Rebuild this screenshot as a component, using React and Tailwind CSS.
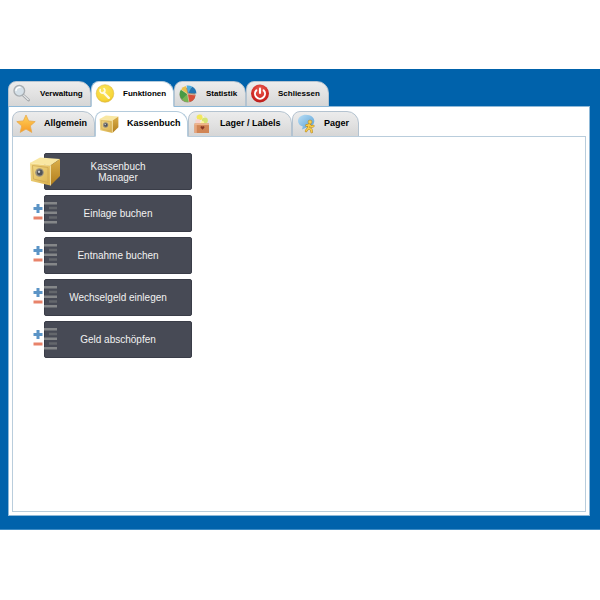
import { useState } from 'react';

function MagnifierIcon() {
  return (
    <svg className="w-5 h-5" viewBox="0 0 20 20" fill="none">
      <path d="M11.500 11.500l5 4.500" stroke="#a0a4a8" strokeWidth="2.800" strokeLinecap="round" />
      <path d="M11.600 11.400l4.700 4.300" stroke="#e8eaec" strokeWidth="1.200" strokeLinecap="round" />
      <circle cx="7.300" cy="6.800" r="5.300" fill="#d5e0e8" stroke="#a9aeb2" strokeWidth="1.400" />
      <path d="M4 6.500a3.500 3.500 0 0 1 4-3.200" stroke="#fff" strokeWidth="1.400" strokeLinecap="round" />
    </svg>
  );
}

function WrenchIcon() {
  return (
    <svg className="w-5 h-5" viewBox="0 0 20 20">
      <defs>
        <radialGradient id="wrenchFill" cx="45%" cy="30%" r="80%">
          <stop offset="0" stopColor="#fbe45c" />
          <stop offset="0.7" stopColor="#f7d638" />
          <stop offset="1" stopColor="#dfb021" />
        </radialGradient>
      </defs>
      <circle cx="10" cy="9.500" r="8.800" fill="url(#wrenchFill)" stroke="#dcb843" strokeWidth="0.600" />
      <path d="M8.500 8.500l5.300 5.300" stroke="#fffbe4" strokeWidth="2.400" strokeLinecap="round" />
      <path d="M5.200 5.600a2.600 2.600 0 0 0 3.400 3.400 2.600 2.600 0 0 0 .4-4.300" fill="none" stroke="#fffbe4" strokeWidth="1.600" strokeLinecap="round" />
    </svg>
  );
}

function PieIcon() {
  return (
    <svg className="w-5 h-5" viewBox="0 0 20 20">
      <ellipse cx="9.500" cy="11" rx="8" ry="7.400" fill="#a08f78" />
      <path d="M9.500 10L3 5.500A8 8 0 0 0 4 15.500z" fill="#479b44" />
      <path d="M9.500 10L4 15.500a8 8 0 0 0 7 2.500z" fill="#74b551" />
      <path d="M9.500 10l1.500 8a8 8 0 0 0 6.500-7z" fill="#d6503a" />
      <path d="M9.500 10L3 5.500A8 8 0 0 1 7.800 2z" fill="#eac04c" />
      <path d="M10.300 9L8.500 1.500a8.400 8.400 0 0 1 5.500 1z" fill="#49ace0" />
      <path d="M10.500 9l3.500-6.500a8 8 0 0 1 4.400 7z" fill="#2175b2" />
      <path d="M3 5.500L9.500 10l8 1M9.500 10l1.500 8" fill="none" stroke="#f3ead2" strokeWidth="0.500" />
    </svg>
  );
}

function PowerIcon() {
  return (
    <svg className="w-5 h-5" viewBox="0 0 20 20" fill="none">
      <defs>
        <radialGradient id="powerFill" cx="50%" cy="30%" r="75%">
          <stop offset="0" stopColor="#ec6358" />
          <stop offset="0.600" stopColor="#d32c26" />
          <stop offset="1" stopColor="#b51a1a" />
        </radialGradient>
      </defs>
      <circle cx="10" cy="9.500" r="9" fill="url(#powerFill)" />
      <path d="M6.300 6.300a5 5 0 1 0 7.400 0" stroke="#fff" strokeWidth="2" strokeLinecap="round" />
      <path d="M10 4.500v4.500" stroke="#fff" strokeWidth="2" strokeLinecap="round" />
    </svg>
  );
}

function StarIcon() {
  return (
    <svg className="w-5 h-5" viewBox="0 0 20 20">
      <defs>
        <linearGradient id="starFill" x1="0" y1="0" x2="0" y2="1">
          <stop offset="0" stopColor="#ffd35c" />
          <stop offset="1" stopColor="#f79a25" />
        </linearGradient>
      </defs>
      <path
        d="M10 1l2.700 5.900 6.500.7-4.900 4.300 1.500 6.500L10 15.100l-5.800 3.300 1.500-6.500L.8 7.600l6.500-.7z"
        fill="url(#starFill)"
        stroke="#e9a94b"
        strokeWidth="0.800"
        strokeLinejoin="round"
      />
    </svg>
  );
}

function SafeIcon({ className }) {
  return (
    <svg className={className} viewBox="0 0 32 32">
      <defs>
        <linearGradient id="safeFront" x1="0" y1="0" x2="1" y2="1">
          <stop offset="0" stopColor="#f3dc8c" />
          <stop offset="1" stopColor="#dbb14c" />
        </linearGradient>
        <linearGradient id="safeSide" x1="0" y1="0" x2="0" y2="1">
          <stop offset="0" stopColor="#dcb04a" />
          <stop offset="1" stopColor="#b07c1c" />
        </linearGradient>
      </defs>
      <path d="M1 8L11 2.500l20 1.500-9.500 6.500z" fill="#f9e7a2" />
      <path d="M21.500 10.500L31 4v17l-9.500 9.500z" fill="url(#safeSide)" />
      <path d="M1 8l20.500 2.500v20L2 26z" fill="url(#safeFront)" />
      <path d="M3.500 10.500L19 12.500v15L4.500 24z" fill="none" stroke="#cfa650" strokeWidth="0.800" />
      <path d="M1 8l20.500 2.500v20" fill="none" stroke="#fbebb0" strokeWidth="0.800" />
      <ellipse cx="10.500" cy="17.500" rx="4.300" ry="4.300" fill="#989080" />
      <circle cx="10.800" cy="17.500" r="2.900" fill="#505257" />
      <circle cx="10" cy="16.800" r="1.200" fill="#c7cacc" />
    </svg>
  );
}

function BasketIcon() {
  return (
    <svg className="w-5 h-5" viewBox="0 0 20 20">
      <path d="M3.500 10.500L4.500 2l5-1.500 6 4v6z" fill="#f8f5e8" stroke="#ded6c4" strokeWidth="0.500" />
      <circle cx="7.700" cy="3.300" r="2.900" fill="#f2e75c" />
      <circle cx="12.800" cy="6.400" r="3" fill="#d4e472" />
      <circle cx="6" cy="7.400" r="2.500" fill="#f8d3cd" />
      <circle cx="10.400" cy="9" r="1.900" fill="#fff3a0" />
      <path d="M2.500 9.500h14.500v9.500H2.500z" fill="#d18555" />
      <path d="M2.500 9.500h14.500v1.600H2.500z" fill="#efb58c" />
      <path d="M2.500 11v8h2.300v-8z" fill="#e7a67e" />
      <path d="M10.500 12.800c-.8-1-2.500-.3-1.800 1l1.800 1.900 1.800-1.900c.7-1.300-1-2-1.800-1z" fill="#873523" />
    </svg>
  );
}

function PagerIcon() {
  return (
    <svg className="w-5 h-5" viewBox="0 0 20 20">
      <defs>
        <linearGradient id="bubbleFill" x1="0" y1="0" x2="1" y2="1">
          <stop offset="0" stopColor="#b9def5" />
          <stop offset="1" stopColor="#559fd6" />
        </linearGradient>
      </defs>
      <path d="M10 .8c4.800 0 8.300 2.800 8.300 6.200S15 13.500 10.500 13.500l-4.500 2 .8-3C4 11.800 2 9.600 2 7c0-3.500 3.500-6.200 8-6.200z" fill="url(#bubbleFill)" />
      <g fill="none" strokeLinecap="round" strokeLinejoin="round">
        <path d="M13.300 10.500l-1 3.500 2.900 1.500.5 2.500M12.300 14L10 17M10.500 11.500l2.800-.8 2 2 2-.7" stroke="#a87c24" strokeWidth="2.400" />
        <path d="M13.300 10.500l-1 3.500 2.900 1.500.5 2.500M12.300 14L10 17M10.500 11.500l2.800-.8 2 2 2-.7" stroke="#f8cd48" strokeWidth="1.600" />
      </g>
      <circle cx="14" cy="8" r="2" fill="#f8cd48" stroke="#a87c24" strokeWidth="0.500" />
    </svg>
  );
}

function BookingIcon() {
  return (
    <svg className="w-6 h-6" viewBox="0 0 24 24">
      <path d="M3.500 2h3v3h3v3h-3v3h-3V8h-3V5h3z" fill="#5b94c6" />
      <path d="M.5 14.500h9v3h-9z" fill="#e8836a" />
      <path d="M11 0h13v2.500H11zM11 9.500h13V12H11zM11 19h13v2.500H11z" fill="#858789" />
      <path d="M16 4.700h8v2.500h-8zM16 14.200h8v2.500h-8z" fill="#64676c" />
    </svg>
  );
}

const mainTabs = [
  { label: 'Verwaltung', icon: <MagnifierIcon />, width: 'w-[83px]' },
  { label: 'Funktionen', icon: <WrenchIcon />, width: 'w-[83px]' },
  { label: 'Statistik', icon: <PieIcon />, width: 'w-[72px]' },
  { label: 'Schliessen', icon: <PowerIcon />, width: 'w-[83px]' },
];

const subTabs = [
  { label: 'Allgemein', icon: <StarIcon />, width: 'w-[83px]' },
  { label: 'Kassenbuch', icon: <SafeIcon className="w-5 h-5" />, width: 'w-[93px]' },
  { label: 'Lager / Labels', icon: <BasketIcon />, width: 'w-[104px]' },
  { label: 'Pager', icon: <PagerIcon />, width: 'w-[67px]' },
];

const actions = ['Kassenbuch Manager', 'Einlage buchen', 'Entnahme buchen', 'Wechselgeld einlegen', 'Geld abschöpfen'];

function Tabs({ tabs, active, onSelect, textSize }) {
  return (
    <div role="tablist" className="flex -mb-px">
      {tabs.map((tab) => (
        <button
          key={tab.label}
          role="tab"
          aria-selected={tab.label === active}
          onClick={() => onSelect(tab.label)}
          className={`flex items-center gap-2 shrink-0 h-[26px] pl-[3px] border rounded-tl-lg rounded-tr-xl font-bold whitespace-nowrap text-black ${textSize} ${tab.width} ${
            tab.label === active
              ? 'relative bg-white border-[#b4cbdc] border-b-white'
              : 'bg-linear-to-b from-[#ececec] via-[#e2e2e2] to-[#d6d6d6] border-[#b4c3d0]'
          }`}
        >
          {tab.icon}
          {tab.label}
        </button>
      ))}
    </div>
  );
}

export default function App() {
  const [mainTab, setMainTab] = useState('Funktionen');
  const [subTab, setSubTab] = useState('Kassenbuch');

  return (
    <div className="min-h-screen flex flex-col bg-white pt-[69px] pb-[70px] font-['Liberation_Sans',Arial,sans-serif]">
      <main className="flex-1 flex flex-col bg-[#0062ab] border-b border-[#3d8bc5] pt-3 pl-2 pr-[10px] pb-[13px]">
        <Tabs tabs={mainTabs} active={mainTab} onSelect={setMainTab} textSize="text-[8px]" />

        {/* Outer panel */}
        <div className="flex-1 flex flex-col bg-white border border-[#8fb9d8] pt-1 px-[3px] pb-[3px]">
          <Tabs tabs={subTabs} active={subTab} onSelect={setSubTab} textSize="text-[9px]" />

          {/* Inner panel */}
          <div className="flex-1 bg-white border border-[#b9cddc] pt-4 pl-[31px] pb-4">
            <div className="flex flex-col gap-[5px] w-[148px]">
              {actions.map((action, index) => (
                <button
                  key={action}
                  className="relative flex items-center justify-center h-[37px] px-8 rounded-xs border border-[#3a3d48] bg-[#474a55] hover:bg-[#555863] text-[10px] leading-[11px] text-[#f2f2f2]"
                >
                  {index === 0 ? (
                    <span className="absolute -left-4 top-px"><SafeIcon className="w-8 h-8" /></span>
                  ) : (
                    <span className="absolute -left-3 top-[6px]"><BookingIcon /></span>
                  )}
                  <span className={index === 0 ? '' : 'whitespace-nowrap'}>{action}</span>
                </button>
              ))}
            </div>
          </div>
        </div>
      </main>
    </div>
  );
}
